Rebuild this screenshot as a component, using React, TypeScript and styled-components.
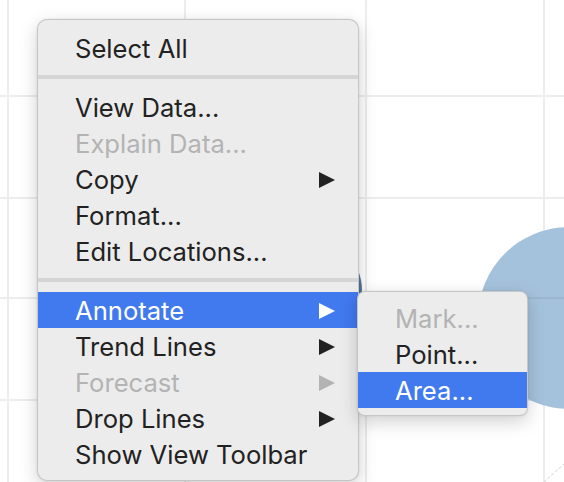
import React from 'react';
import styled, { createGlobalStyle } from 'styled-components';

type Entry =
	| { kind: 'item'; label: string; disabled?: boolean; active?: boolean; submenu?: boolean }
	| { kind: 'separator' };

const mainMenu: Entry[] = [
	{ kind: 'item', label: 'Select All' },
	{ kind: 'separator' },
	{ kind: 'item', label: 'View Data...' },
	{ kind: 'item', label: 'Explain Data...', disabled: true },
	{ kind: 'item', label: 'Copy', submenu: true },
	{ kind: 'item', label: 'Format...' },
	{ kind: 'item', label: 'Edit Locations...' },
	{ kind: 'separator' },
	{ kind: 'item', label: 'Annotate', submenu: true, active: true },
	{ kind: 'item', label: 'Trend Lines', submenu: true },
	{ kind: 'item', label: 'Forecast', submenu: true, disabled: true },
	{ kind: 'item', label: 'Drop Lines', submenu: true },
	{ kind: 'item', label: 'Show View Toolbar' },
];

const annotateMenu: Entry[] = [
	{ kind: 'item', label: 'Mark...', disabled: true },
	{ kind: 'item', label: 'Point...' },
	{ kind: 'item', label: 'Area...', active: true },
];

// chart grid lines sitting behind the menus
const gridX = [8, 185, 366, 544];
const gridY = [96, 198, 298, 400];

function ChartBackdrop() {
	return (
		<Chart width={564} height={482} viewBox="0 0 564 482">
			{gridX.map(x => (
				<line key={`x${x}`} x1={x} y1={0} x2={x} y2={482} stroke="#ededed" strokeWidth={2} />
			))}
			{gridY.map(y => (
				<line key={`y${y}`} x1={0} y1={y} x2={564} y2={y} stroke="#ededed" strokeWidth={2} />
			))}
			<circle cx={312} cy={290} r={50} fill="#55799f" />
			<circle cx={569} cy={318} r={91} fill="#a5c2dc" />
			<line x1={568} y1={298} x2={478} y2={298} stroke="#9bb6cf" strokeWidth={2} />
			<line x1={544} y1={482} x2={564} y2={464} stroke="#d0d0d0" strokeWidth={1} strokeDasharray="3 2" />
		</Chart>
	);
}

function MenuList({ entries }: { entries: Entry[] }) {
	return (
		<>
			{entries.map((entry, i) =>
				entry.kind === 'separator' ? (
					<Separator key={i} />
				) : (
					<Item key={i} $active={entry.active} $disabled={entry.disabled}>
						<span>{entry.label}</span>
						{entry.submenu && <Arrow />}
					</Item>
				)
			)}
		</>
	);
}

export default function App() {
	return (
		<>
			<GlobalStyle />
			<Canvas>
				<ChartBackdrop />
				<ContextMenu>
					<MenuList entries={mainMenu} />
				</ContextMenu>
				<SubMenu>
					<MenuList entries={annotateMenu} />
				</SubMenu>
			</Canvas>
		</>
	);
}

const GlobalStyle = createGlobalStyle`
	html, body {
		margin: 0;
		padding: 0;
		background: #ffffff;
		overflow: hidden;
	}
	body {
		font-family: Inter, "Noto Sans", "DejaVu Sans", sans-serif;
	}
`;

const Canvas = styled.div`
	position: relative;
	width: 564px;
	height: 482px;
	overflow: hidden;
	background: #ffffff;
`;

const Chart = styled.svg`
	display: block;
`;

const menuSurface = `
	position: absolute;
	box-sizing: border-box;
	background: #ececec;
	border: 1px solid rgba(0, 0, 0, 0.16);
	box-shadow: 0 6px 18px rgba(0, 0, 0, 0.18), 0 0 3px rgba(0, 0, 0, 0.08);
	overflow: hidden;
`;

const ContextMenu = styled.div`
	${menuSurface}
	left: 37px;
	top: 19px;
	width: 322px;
	height: 462px;
	border-radius: 10px;
	padding: 10px 0 8px;
`;

const SubMenu = styled.div`
	${menuSurface}
	left: 357px;
	top: 291px;
	width: 171px;
	border-radius: 8px;
	padding: 8px 0 7px;
`;

const Item = styled.div<{ $active?: boolean; $disabled?: boolean }>`
	display: flex;
	align-items: center;
	justify-content: space-between;
	box-sizing: border-box;
	height: 36px;
	padding: 1px 23px 0 37px;
	font-size: 25.6px;
	white-space: nowrap;
	background: ${p => (p.$active ? '#4179ef' : 'transparent')};
	color: ${p => (p.$active ? '#ffffff' : p.$disabled ? '#b3b3b3' : '#222222')};
`;

const Arrow = styled.i`
	width: 0;
	height: 0;
	border-top: 8px solid transparent;
	border-bottom: 8px solid transparent;
	border-left: 16px solid currentColor;
`;

const Separator = styled.div`
	height: 4px;
	margin: 9px 0 10px;
	background: #d5d5d5;
`;
